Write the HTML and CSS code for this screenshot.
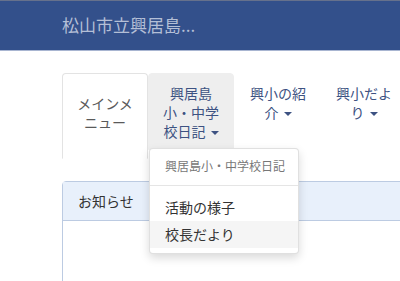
FILE: index.html
```html
<!DOCTYPE html>
<html lang="ja">
<head>
<meta charset="utf-8">
<link rel="stylesheet" href="styles.css">
</head>
<body>
<header class="site-header">
  <div class="brand">松山市立興居島...</div>
</header>
<main class="content">
  <ul class="tabs">
    <li class="tab active"><a>メインメニュー</a></li>
    <li class="tab open"><a>興居島小・中学校日記 <span class="caret"></span></a>
      <ul class="dropdown">
        <li class="dd-header">興居島小・中学校日記</li>
        <li class="dd-divider"></li>
        <li class="dd-item">活動の様子</li>
        <li class="dd-item hover">校長だより</li>
      </ul>
    </li>
    <li class="tab"><a>興小の紹介 <span class="caret"></span></a></li>
    <li class="tab"><a>興小だより <span class="caret"></span></a></li>
  </ul>
  <section class="panel">
    <div class="panel-heading">お知らせ</div>
    <div class="panel-body"></div>
  </section>
</main>
</body>
</html>
```
FILE: styles.css
```css
* { box-sizing: border-box; }
html, body { margin: 0; padding: 0; }
body {
  width: 400px;
  height: 281px;
  overflow: hidden;
  background: #fff;
  font-family: "Noto Sans CJK JP", "Noto Sans", sans-serif;
  font-size: 14px;
  color: #333;
}
.site-header {
  height: 51px;
  background: #33508b;
  border-top: 1px solid #66718c;
  border-bottom: 1px solid #a8b5d1;
  display: flex;
  align-items: center;
  padding-left: 62px;
}
.brand {
  color: #b4bfd6;
  font-size: 17px;
  line-height: 1;
  padding-bottom: 2px;
}
.content {
  padding-left: 62px;
  height: 230px;
  overflow: hidden;
}
.tabs {
  list-style: none;
  margin: 22px 0 0 0;
  padding: 0;
  display: flex;
  align-items: flex-start;
  height: 86px;
}
.tab {
  position: relative;
  width: 86px;
  flex: none;
  text-align: center;
}
.tab:nth-child(3) { margin-left: 1px; }
.tab a {
  display: block;
  padding: 10px 12px;
  line-height: 19px;
  color: #3d5282;
  border: 1px solid transparent;
  border-radius: 4px 4px 0 0;
  height: 77px;
}
.tab.active a {
  color: #5a5a5a;
  background: #fff;
  border-color: #e3e3e3 #e3e3e3 transparent;
  height: 86px;
  padding-top: 20px;
}
.tab.open a {
  background: #eee;
  border-color: #eee;
}
.caret {
  display: inline-block;
  width: 0;
  height: 0;
  margin-left: 2px;
  vertical-align: middle;
  border-top: 4px solid;
  border-left: 4px solid transparent;
  border-right: 4px solid transparent;
}
.dropdown {
  position: absolute;
  top: 75px;
  left: 1px;
  width: 150px;
  list-style: none;
  margin: 0;
  padding: 5px 0;
  background: #fff;
  border: 1px solid rgba(0,0,0,.12);
  border-radius: 4px;
  box-shadow: 0 4px 10px rgba(0,0,0,.15);
  text-align: left;
  z-index: 10;
}
.dd-header {
  padding: 3px 15px;
  font-size: 12px;
  line-height: 17px;
  color: #777;
  white-space: nowrap;
}
.dd-divider {
  height: 1px;
  margin: 8px 0;
  background: #e5e5e5;
}
.dd-item {
  padding: 3px 15px;
  line-height: 21px;
  color: #333;
  white-space: nowrap;
}
.dd-item.hover { background: #f5f5f5; }
.panel {
  margin-top: 22px;
  width: 400px;
  border: 1px solid #bccbe2;
  border-radius: 4px 0 0 0;
  height: 120px;
}
.panel-heading {
  background: #e8f0fb;
  border-bottom: 1px solid #bccbe2;
  padding: 9px 15px;
  line-height: 20px;
  font-size: 14px;
  color: #333;
}
```
